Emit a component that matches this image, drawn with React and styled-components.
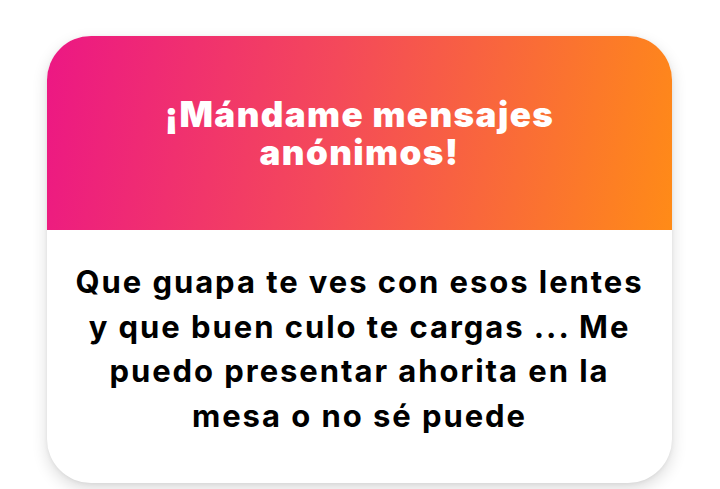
import React from 'react';
import styled, { createGlobalStyle } from 'styled-components';

const GlobalStyle = createGlobalStyle`
  html, body {
    margin: 0;
    padding: 0;
    background: #ffffff;
  }
  body {
    font-family: Inter, "Noto Sans", sans-serif;
  }
`;

const Page = styled.div`
  width: 720px;
  height: 489px;
  box-sizing: border-box;
  padding: 36px 48px 0 47px;
  overflow: hidden;
`;

const Card = styled.div`
  width: 625px;
  height: 447px;
  border-radius: 44px;
  overflow: hidden;
  background: #ffffff;
  box-shadow: 0 6px 16px rgba(0, 0, 0, 0.14), 0 1px 4px rgba(0, 0, 0, 0.06);
  display: flex;
  flex-direction: column;
`;

const Header = styled.div`
  height: 194px;
  flex: none;
  display: flex;
  align-items: center;
  justify-content: center;
  background: linear-gradient(100deg, #ec1784 0%, #f4495a 45%, #ff8b17 100%);
`;

const Title = styled.h1`
  margin: 0;
  color: #ffffff;
  font-family: Inter, sans-serif;
  font-weight: 900;
  font-size: 35px;
  line-height: 38px;
  letter-spacing: 1.4px;
  text-align: center;
`;

const Body = styled.div`
  flex: 1;
  display: flex;
  align-items: flex-start;
  justify-content: center;
  padding: 30px 0 0;
`;

const Message = styled.p`
  margin: 0;
  color: #000000;
  font-family: Inter, sans-serif;
  font-weight: 700;
  font-size: 31px;
  line-height: 44.5px;
  letter-spacing: 1.95px;
  text-align: center;
  white-space: nowrap;
`;

export default function App() {
  return (
    <>
      <GlobalStyle />
      <Page>
        <Card>
          <Header>
            <Title>
              ¡Mándame mensajes
              <br />
              anónimos!
            </Title>
          </Header>
          <Body>
            <Message>
              Que guapa te ves con esos lentes
              <br />
              y que buen culo te cargas ... Me
              <br />
              puedo presentar ahorita en la
              <br />
              mesa o no sé puede
            </Message>
          </Body>
        </Card>
      </Page>
    </>
  );
}
